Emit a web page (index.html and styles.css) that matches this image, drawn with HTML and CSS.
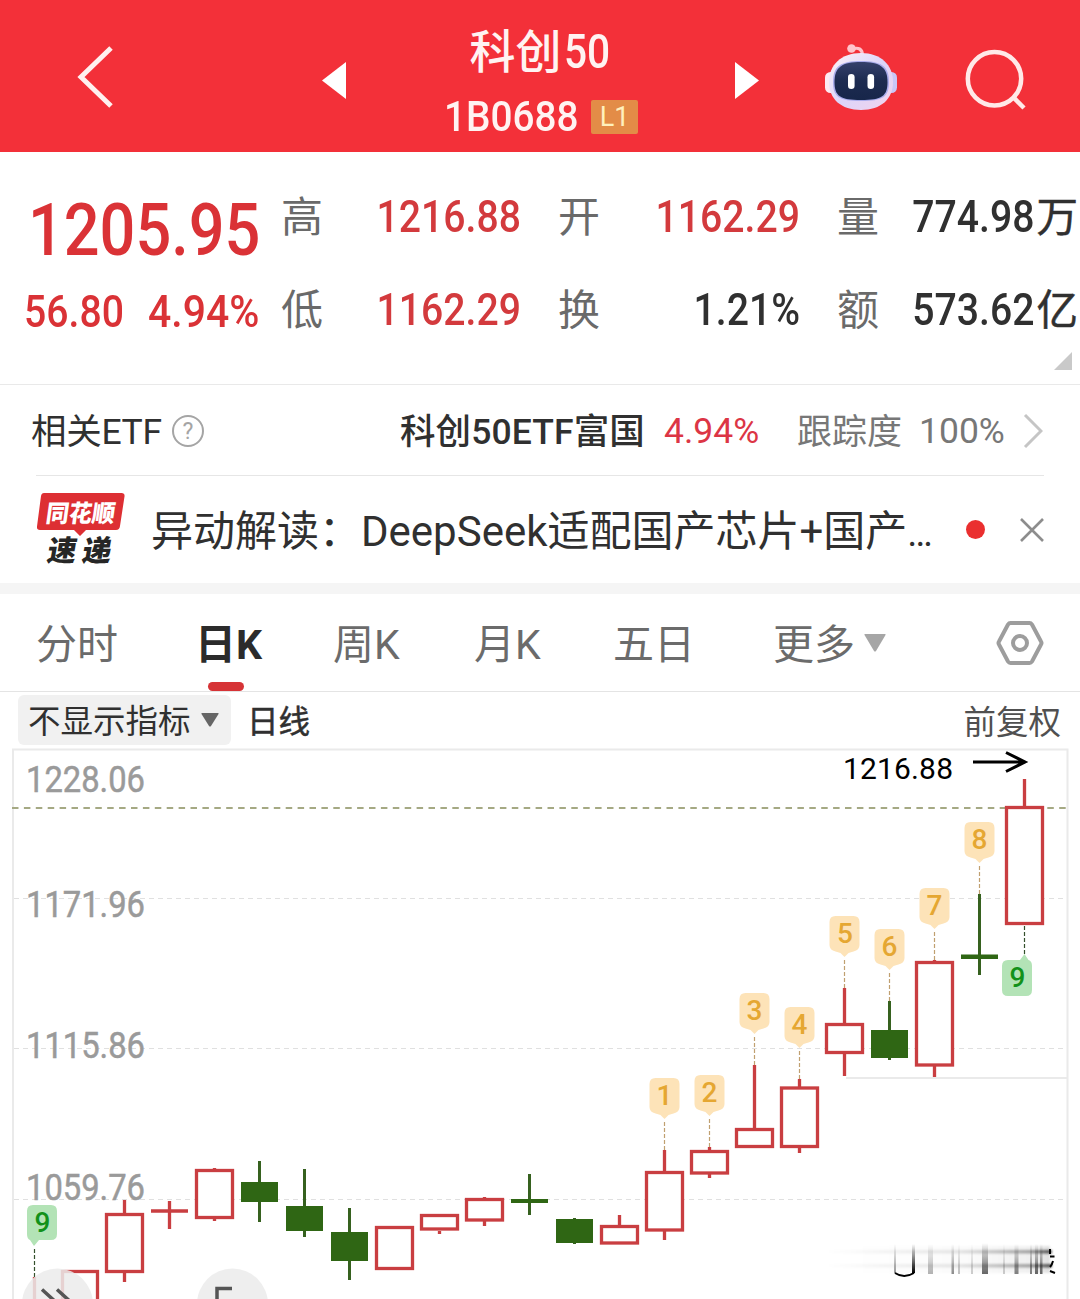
FILE: index.html
```html
<!DOCTYPE html>
<html lang="zh-CN">
<head>
<meta charset="utf-8">
<title>科创50 1B0688</title>
<link rel="stylesheet" href="styles.css">
</head>
<body>
<header class="topbar">
  <svg class="back" viewBox="0 0 40 66" width="40" height="66"><path d="M36 4 6 33 36 62"/></svg>
  <svg class="prev" viewBox="0 0 24 37" width="24" height="37"><path d="M24 0V37L0 18.500z"/></svg>
  <div class="heading">
    <h1 class="name"><span>科创</span><span class="name-num">50</span></h1>
    <div class="code-row"><span class="code">1B0688</span><span class="level">L1</span></div>
  </div>
  <svg class="next" viewBox="0 0 24 37" width="24" height="37"><path d="M0 0V37L24 18.500z"/></svg>
  <svg class="robot" viewBox="0 0 72 68" width="72" height="68">
    <defs>
      <linearGradient id="shell" x1="0" y1="0" x2="1" y2="1"><stop offset="0" stop-color="#fff4f6"/><stop offset=".5" stop-color="#dcd5fa"/><stop offset="1" stop-color="#f2d3ec"/></linearGradient>
      <linearGradient id="visor" x1="0" y1="0" x2="0" y2="1"><stop offset="0" stop-color="#35406b"/><stop offset=".5" stop-color="#1d2b50"/><stop offset="1" stop-color="#17264a"/></linearGradient>
    </defs>
    <path d="M27 6q10-3 10.500 6" fill="none" stroke="#ffc2cb" stroke-width="3.200"/>
    <circle cx="26.500" cy="5.500" r="4.300" fill="#ffc4cc"/>
    <rect x="0" y="29" width="12" height="21" rx="5.500" fill="#fdeaf2"/>
    <rect x="60" y="29" width="12" height="21" rx="5.500" fill="#c9c6f7"/>
    <path d="M36 10C56 10 68 22 68 39S56 67 36 67 4 56 4 39 16 10 36 10z" fill="url(#shell)"/>
    <path d="M36 18C56 18 64 23 64 39 64 54 58 58 36 58S8 54 8 39C8 23 16 18 36 18z" fill="#a9aceb"/>
    <path d="M36 19C55 19 62.500 24 62.500 39 62.500 53 57 57 36 57S9.500 53 9.500 39C9.500 24 17 19 36 19z" fill="url(#visor)"/>
    <rect x="23" y="31" width="6.600" height="15" rx="3.300" fill="#fff"/>
    <rect x="42.500" y="31" width="6.600" height="15" rx="3.300" fill="#fff"/>
  </svg>
  <svg class="search" viewBox="0 0 62 62" width="62" height="62"><circle cx="29.500" cy="30.700" r="26.700"/><path d="M48.500 49.500 59 60"/></svg>
</header>

<section class="quote">
  <div class="last">
    <div class="price">1205.95</div>
    <div class="change"><span class="delta">56.80</span><span class="pct">4.94%</span></div>
  </div>
  <dl class="stats">
    <dt>高</dt><dd class="up">1216.88</dd>
    <dt>开</dt><dd class="up">1162.29</dd>
    <dt>量</dt><dd class="with-unit"><span class="num">774.98</span><span class="unit">万</span></dd>
    <dt>低</dt><dd class="up">1162.29</dd>
    <dt>换</dt><dd>1.21%</dd>
    <dt>额</dt><dd class="with-unit"><span class="num">573.62</span><span class="unit">亿</span></dd>
  </dl>
  <svg class="expand" viewBox="0 0 18 18" width="18" height="18"><path d="M18 0V18H0z"/></svg>
</section>

<section class="etf">
  <span class="etf-title">相关ETF</span>
  <svg class="help" viewBox="0 0 32 32" width="32" height="32"><circle cx="16" cy="16" r="15"/><text x="16" y="24">?</text></svg>
  <span class="etf-name">科创50ETF富国</span>
  <span class="etf-pct">4.94%</span>
  <span class="track">跟踪度</span>
  <span class="track-pct">100%</span>
  <svg class="chevron" viewBox="0 0 20 36" width="20" height="36"><path d="M2 2 18 18 2 34"/></svg>
</section>

<section class="news">
  <svg class="brand" viewBox="0 0 90 76" width="90" height="76">
    <path d="M8 1H85.500q3.500 0 3 3.500L84 34q-.5 4-4 4H50l-6 6-6-6H4Q.5 38 1 34.500L5 4q.5-3 3-3z" fill="#dd2f33"/>
    <text class="brand-a" transform="translate(9 30) skewX(-8)" textLength="69" lengthAdjust="spacingAndGlyphs">同花顺</text>
    <text class="brand-b" transform="translate(10 69) skewX(-10)" textLength="64" lengthAdjust="spacing">速递</text>
  </svg>
  <span class="headline">异动解读：DeepSeek适配国产芯片+国产<span class="dots">…</span></span>
  <i class="unread"></i>
  <svg class="close" viewBox="0 0 26 26" width="26" height="26"><path d="M2 2 24 24M24 2 2 24"/></svg>
</section>

<nav class="tabs">
  <span class="tab t1">分时</span>
  <span class="tab t2 active">日K</span>
  <span class="tab t3">周K</span>
  <span class="tab t4">月K</span>
  <span class="tab t5">五日</span>
  <span class="tab t6">更多</span>
  <svg class="caret" viewBox="0 0 22 18" width="22" height="18"><path d="M1 0H21q1 0 .5 1L12 17q-1 1-2 0L.5 1Q0 0 1 0z"/></svg>
  <svg class="settings" viewBox="0 0 50 48" width="50" height="48"><path d="M15.500 4H34.500Q36 4 37 5.500L46 22.500Q47 24 46 25.500L37 42.500Q36 44 34.500 44H15.500Q14 44 13 42.500L4 25.500Q3 24 4 22.500L13 5.500Q14 4 15.500 4z"/><circle cx="25" cy="24" r="7"/></svg>
</nav>

<div class="toolbar">
  <span class="indicator"><span class="label">不显示指标</span><svg viewBox="0 0 18 14" width="18" height="14"><path d="M1 0H17q1 0 .5 1L10 13q-1 1-2 0L.5 1Q0 0 1 0z"/></svg></span>
  <span class="label period">日线</span>
  <span class="label adjust">前复权</span>
</div>

<svg class="chart" viewBox="0 748 1080 551" width="1080" height="551">
  <defs>
    <linearGradient id="fadeX"><stop offset="0" stop-color="#000" stop-opacity="0"/><stop offset=".6" stop-color="#000" stop-opacity=".12"/><stop offset=".9" stop-color="#000" stop-opacity=".4"/><stop offset="1" stop-color="#000" stop-opacity=".8"/></linearGradient>
    <linearGradient id="fadeY" x1="0" y1="0" x2="0" y2="1"><stop offset="0" stop-color="#000" stop-opacity="0"/><stop offset="1" stop-color="#000"/></linearGradient>
    <filter id="soft" x="-5%" y="-20%" width="110%" height="140%"><feGaussianBlur stdDeviation=".8"/></filter>
    <path id="pin" d="M-9 0H9Q15 0 15 6V29Q15 34 9 35.500L4 37 0 41-4 37-9 35.500Q-15 34-15 29V6Q-15 0-9 0z"/>
  </defs>
  <path class="frame" d="M13 1299V749.500H1067.500V1299"/>
  <g class="grid"><path d="M14 898.500H1066"/><path d="M14 1048.500H1066"/><path d="M14 1199.500H1066"/></g>
  <path class="frame" d="M846 1078H1067"/>
  <path class="last-line" d="M12 808H1066"/>
  <g class="axis">
    <text x="26" y="791.500" textLength="119" lengthAdjust="spacingAndGlyphs">1228.06</text>
    <text x="26" y="917" textLength="119" lengthAdjust="spacingAndGlyphs">1171.96</text>
    <text x="26" y="1058" textLength="119" lengthAdjust="spacingAndGlyphs">1115.86</text>
    <text x="26" y="1199.500" textLength="119" lengthAdjust="spacingAndGlyphs">1059.76</text>
  </g>

  <g class="up-body">
    <rect x="62.500" y="1271.500" width="35" height="60"/>
    <rect x="106.500" y="1214.500" width="36" height="57"/>
    <rect x="196.500" y="1170.500" width="36" height="47"/>
    <rect x="376.500" y="1227.500" width="36" height="41"/>
    <rect x="421.500" y="1215.500" width="36" height="13.500"/>
    <rect x="466.500" y="1199.500" width="36" height="20.500"/>
    <rect x="601.500" y="1226.500" width="36" height="16.500"/>
    <rect x="646.500" y="1172.500" width="36" height="57.500"/>
    <rect x="691.500" y="1151.500" width="36" height="21.500"/>
    <rect x="736.500" y="1129.500" width="36" height="17"/>
    <rect x="781.500" y="1088" width="36" height="58.500"/>
    <rect x="826.500" y="1024.500" width="36" height="28"/>
    <rect x="916.500" y="962.500" width="36" height="102.500"/>
    <rect x="1006.500" y="807.500" width="36" height="116"/>
    <path d="M124.500 1200v13M124.500 1273v9M151 1211h37M169.500 1201v28M214.500 1168v2M214.500 1219v2M439.500 1231v3M484.500 1197v2M484.500 1221v5M619.500 1215v10M664.500 1150v21M664.500 1231v9M709.500 1147v3M709.500 1174v4M754.500 1065v63M799.500 1079v8M799.500 1148v5M844.500 988v35M844.500 1054v22M934.500 960v2M934.500 1066v11M1024.500 779v27M34.500 1277v22"/>
  </g>
  <g class="down-body">
    <path class="wick" d="M259.500 1161v61M304.500 1169v68M349.500 1208v72M529.500 1174v41M574.500 1218v26M889.500 1001v59M979.500 894v81"/>
    <path d="M241 1182h37v20h-37zM286 1206h37v25h-37zM331 1232h37v29h-37zM556 1219h37v24h-37zM871 1030h37v28h-37zM511 1199h37v4h-37zM961 954.500h37v4.500h-37z"/>
  </g>

  <g class="lead"><path d="M664.500 1122v28M709.500 1119v28M754.500 1037v28M799.500 1051v28M844.500 960v28M889.500 973v28M934.500 932v28M979.500 866v28"/></g>
  <g class="lead dark"><path d="M1024.500 926v28M34.500 1249v28"/></g>
  <g class="pins">
    <use href="#pin" x="664.500" y="1078"/><text x="664.500" y="1105">1</text>
    <use href="#pin" x="709.500" y="1075"/><text x="709.500" y="1102">2</text>
    <use href="#pin" x="754.500" y="993"/><text x="754.500" y="1020">3</text>
    <use href="#pin" x="799.500" y="1007"/><text x="799.500" y="1034">4</text>
    <use href="#pin" x="844.500" y="916"/><text x="845" y="943">5</text>
    <use href="#pin" x="889.500" y="929"/><text x="889.500" y="956">6</text>
    <use href="#pin" x="934.500" y="888"/><text x="934.500" y="915">7</text>
    <use href="#pin" x="979.500" y="822"/><text x="979.500" y="849">8</text>
  </g>
  <g class="pins green">
    <path d="M33 1205H51q6 0 6 6v23q0 6-6 6H39l-5 6-4-6q-3-1-3-6v-23q0-6 6-6z"/><text x="42.500" y="1232">9</text>
    <path d="M1008 960H1020l4.500-6 4 6q3.500 1 3.500 6v24q0 6-6 6H1008q-6 0-6-6V966q0-6 6-6z"/><text x="1017.500" y="987">9</text>
  </g>

  <text class="high" x="843" y="779" textLength="110">1216.88</text>
  <path class="arrow" d="M973 762H1024M1006 752.500 1025 762 1006 771.500"/>

  <circle class="knob" cx="57.500" cy="1304" r="35.500"/>
  <circle class="knob" cx="232.500" cy="1304" r="35.500"/>
  <path class="knob-icon" d="M42 1289.500 58 1304 42 1318M57 1289.500 73 1304 57 1318M217 1303V1288.500H232"/>

  <g class="smear">
    <g filter="url(#soft)">
      <rect x="826" y="1250" width="226" height="3.500" fill="url(#fadeX)" opacity=".8"/>
      <rect x="826" y="1264" width="226" height="3.500" fill="url(#fadeX)" opacity=".8"/>
      <rect x="850" y="1246" width="200" height="27" fill="url(#fadeX)" opacity=".15"/>
    </g>
    <g fill="url(#fadeY)">
      <rect x="894" y="1244" width="2" height="29" opacity=".4"/><rect x="912" y="1244" width="3" height="29"/>
      <rect x="928" y="1244" width="5" height="30" opacity=".3"/><rect x="951.500" y="1244" width="2.500" height="30" opacity=".45"/>
      <rect x="958" y="1244" width="2" height="30" opacity=".25"/><rect x="971" y="1244" width="2" height="30" opacity=".2"/>
      <rect x="982" y="1243" width="6" height="31" opacity=".6"/><rect x="1003" y="1244" width="2" height="30" opacity=".2"/>
      <rect x="1014.500" y="1244" width="4" height="30" opacity=".5"/><rect x="1030" y="1244" width="2" height="30" opacity=".5"/>
      <rect x="1035" y="1244" width="3" height="30" opacity=".6"/><rect x="1040" y="1244" width="2.500" height="30" opacity=".6"/>
    </g>
    <path class="ink" d="M895 1273q9 6 19 0M1050 1249v5M1050 1256.500h4.500M1053 1261q-1 4-3 6M1050 1271l5 2"/>
  </g>
</svg>
</body>
</html>
```
FILE: styles.css
```css
* { box-sizing: border-box; }
body {
  margin: 0;
  width: 1080px;
  height: 1299px;
  overflow: hidden;
  background: #fff;
  color: #303030;
  font-family: Roboto, "Noto Sans CJK SC", sans-serif;
}
svg { display: block; flex: none; }
span { white-space: nowrap; }

/* Title bar */
.topbar {
  display: flex;
  align-items: flex-start;
  height: 152px;
  background: #f33039;
  color: #fff3f2;
}
.back { margin: 44px 0 0 75px; fill: none; stroke: #fff0ef; stroke-width: 5; }
.prev { margin: 62px 0 0 207px; fill: #fff; }
.heading { width: 390px; display: flex; flex-direction: column; align-items: center; }
.name { display: flex; align-items: center; width: 143px; height: 64px; margin: 20px 0 0; font-size: 46px; font-weight: 500; line-height: 64px; }
.name > span { flex: none; }
.name-num { font-size: 49px; transform: scaleX(.83); transform-origin: left; margin-left: 2px; }
.code-row { display: flex; align-items: center; width: 194px; height: 50px; margin-top: 7px; }
.code { width: 147px; font-size: 43px; font-weight: 500; line-height: 50px; transform: scaleX(.9); transform-origin: left; }
.level { width: 47px; height: 34px; margin-top: 1px; border-radius: 2px; background: #e38c47; color: #fff0bd; font-size: 27px; line-height: 34px; text-align: center; }
.next { margin: 62px 0 0 -1px; fill: #fff; }
.robot { margin: 43px 0 0 66px; }
.search { margin: 48px 0 0 68px; fill: none; stroke: #ffe9e8; stroke-width: 4.500; }

/* Quote figures */
.quote { position: relative; display: flex; height: 233px; border-bottom: 1px solid #e9e9e9; }
.last { width: 281px; color: #da3236; font-weight: 500; }
.price { margin: 34px 0 0 28px; font-size: 73px; line-height: 88px; transform: scaleX(.863); transform-origin: left; }
.change { display: flex; height: 50px; margin: 13px 0 0 24px; font-size: 44.500px; line-height: 50px; }
.delta, .pct { transform: scaleX(.88); transform-origin: left; }
.pct { transform: scaleX(.92); }
.delta { width: 124px; }
.stats {
  display: grid;
  grid-template-columns: 41px 199px 79px 200px 79px 199px;
  grid-template-rows: 93px 93px;
  align-items: center;
  height: 186px;
  margin: 18px 0 0;
}
.stats dt { padding-top: 2px; color: #6a6a6a; font-size: 42px; line-height: 60px; text-align: right; }
.stats dd { margin: 0; text-align: right; font-size: 45px; font-weight: 500; line-height: 60px; transform: scaleX(.87); transform-origin: right; }
.stats dd.up { color: #d33a3d; }
.stats dd.with-unit { display: flex; justify-content: flex-end; align-items: center; transform: none; }
.num { transform: scaleX(.87); transform-origin: right; margin-right: 2px; }
.unit { padding-top: 2px; font-size: 41.500px; font-weight: 400; -webkit-text-stroke: .5px #303030; }
.expand { position: absolute; right: 8px; bottom: 14px; fill: #c9c9c9; }

/* Related fund */
.etf { display: flex; align-items: center; height: 91px; margin: 0 36px 0 31px; position: relative; font-size: 35.500px; line-height: 50px; }
.etf::after { content: ""; position: absolute; left: 5px; right: 0; bottom: 0; height: 1px; background: #e6e6e6; }
.etf-title { width: 141px; padding-top: 2px; letter-spacing: -.3px; }
.help circle { fill: none; stroke: #a5a5a5; stroke-width: 2; }
.help text { font-size: 23px; text-anchor: middle; fill: #a5a5a5; }
.etf-name { width: 264px; margin-left: 196px; padding-top: 2px; font-weight: 500; letter-spacing: .1px; }
.etf-pct { width: 133px; padding-top: 1px; color: #dc3545; }
.track { width: 122px; padding-top: 4px; color: #777; font-size: 35px; }
.track-pct { padding-top: 1px; color: #777; width: 104px; }
.chevron { fill: none; stroke: #c5c5c5; stroke-width: 3; }

/* News */
.news { display: flex; align-items: center; height: 107px; padding-left: 36px; }
.brand-a { font: 900 24px "Noto Sans CJK SC", sans-serif; fill: #fff; }
.brand-b { font: 900 29px "Noto Sans CJK SC", sans-serif; fill: #262626; }
.headline { width: 815px; margin: 5px 0 0 25px; font-size: 42px; line-height: 60px; }
.dots { font-size: 38px; }
.unread { flex: none; width: 19px; height: 19px; border-radius: 50%; background: #ea2f2f; }
.close { margin-left: 34px; fill: none; stroke: #8d8d8d; stroke-width: 2.600; }

/* Period tabs */
.tabs { display: flex; align-items: center; height: 109px; border-top: 11px solid #f5f5f5; border-bottom: 1px solid #e4e4e4; color: #6b6b6b; font-size: 41px; line-height: 97px; }
.tab { flex: none; height: 97px; padding-top: 3px; }
.t1 { width: 159px; margin-left: 36px; }
.t2 { width: 138px; position: relative; }
.t3 { width: 141px; }
.t4 { width: 139px; }
.t5 { width: 160px; }
.t6 { width: 91px; }
.active { color: #2b2b2b; font-weight: 700; }
.active::after { content: ""; position: absolute; left: 13px; bottom: 0; width: 36px; height: 9px; border-radius: 5px; background: #d63336; }
.caret { fill: #a6a6a6; }
.settings { margin-left: 109px; fill: none; stroke: #9d9d9d; stroke-width: 4; }

/* Chart toolbar */
.toolbar { display: flex; align-items: center; height: 56px; padding: 0 19px 0 18px; font-size: 32.500px; line-height: 50px; }
.label { padding-top: 5px; }
.indicator { display: flex; align-items: center; width: 213px; height: 50px; margin-top: -1px; padding-left: 10px; border-radius: 6px; background: #f1f1f1; }
.indicator svg { margin-left: 10px; fill: #666; }
.period { margin-left: 16px; font-size: 31.500px; -webkit-text-stroke: .5px #303030; }
.adjust { margin-left: auto; color: #505050; }

/* Candles */
.frame { fill: none; stroke: #eaeaea; stroke-width: 2; }
.grid { stroke: #e0e0e0; stroke-dasharray: 5 4; }
.last-line { stroke: #a5a983; stroke-width: 1.800; stroke-dasharray: 6.500 5.400; }
.axis { fill: #9a9a9a; font-size: 36px; }
.axis text { stroke: #9a9a9a; stroke-width: .5; }
.up-body { fill: none; stroke: #c93e41; stroke-width: 3.300; }
.up-body rect { fill: #fff; }
.down-body { fill: #2f6614; }
.wick { fill: none; stroke: #36611f; stroke-width: 3; }
.lead { fill: none; stroke: #c0a070; stroke-width: 1.200; stroke-dasharray: 4 2; }
.lead.dark { stroke: #34502c; }
.pins { fill: #fde3b8; font-size: 28px; font-weight: 500; text-anchor: middle; }
.pins text { fill: #e5a732; }
.green { fill: #b3e3b6; }
.green text { fill: #12911a; }
.high { font-size: 30px; fill: #000; }
.arrow { fill: none; stroke: #000; stroke-width: 3; }
.knob { fill: #ebebeb; opacity: .85; }
.knob-icon { fill: none; stroke: #555; stroke-width: 3.500; }
.ink { fill: none; stroke: #000; stroke-width: 2; }
```
